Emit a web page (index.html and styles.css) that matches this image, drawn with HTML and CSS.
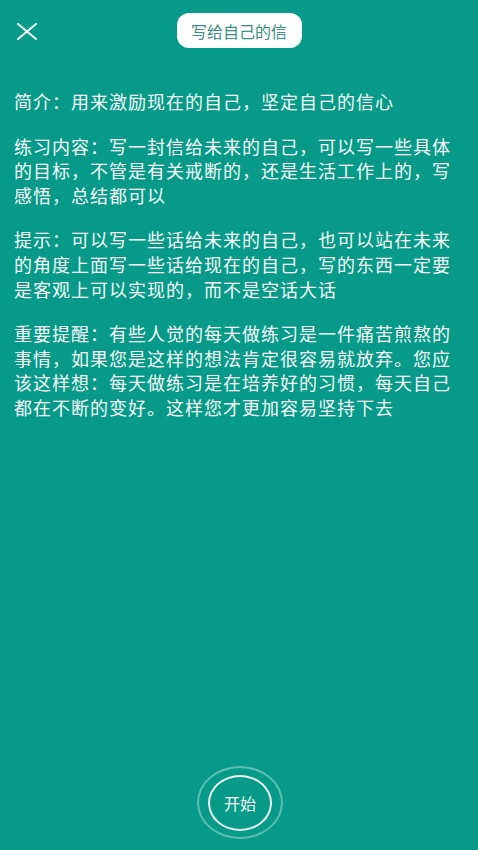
FILE: index.html
```html
<!DOCTYPE html>
<html lang="zh">
<head>
<meta charset="utf-8">
<title>写给自己的信</title>
<link rel="stylesheet" href="styles.css">
</head>
<body>
<div class="page">
  <header class="header">
    <button class="close" aria-label="关闭">
      <svg width="20" height="17" viewBox="0 0 20 17"><path d="M1 1 L19 16 M19 1 L1 16" stroke="#f4fbf9" stroke-width="2" fill="none" stroke-linecap="round"/></svg>
    </button>
    <div class="pill">写给自己的信</div>
  </header>
  <main class="content">
    <p>简介：用来激励现在的自己，坚定自己的信心</p>
    <p>练习内容：写一封信给未来的自己，可以写一些具体的目标，不管是有关戒断的，还是生活工作上的，写感悟，总结都可以</p>
    <p>提示：可以写一些话给未来的自己，也可以站在未来的角度上面写一些话给现在的自己，写的东西一定要是客观上可以实现的，而不是空话大话</p>
    <p>重要提醒：有些人觉的每天做练习是一件痛苦煎熬的事情，如果您是这样的想法肯定很容易就放弃。您应该这样想：每天做练习是在培养好的习惯，每天自己都在不断的变好。这样您才更加容易坚持下去</p>
  </main>
  <footer class="footer">
    <div class="ring-outer">
      <button class="start">开始</button>
    </div>
  </footer>
</div>
</body>
</html>
```
FILE: styles.css
```css
html, body {
  margin: 0;
  padding: 0;
}
body {
  background: #079a88;
  font-family: "Noto Sans CJK SC", "Noto Sans", sans-serif;
  color: #f4fbf9;
}
.page {
  height: 850px;
  display: flex;
  flex-direction: column;
  box-sizing: border-box;
}
.header {
  position: relative;
  height: 35px;
  margin-top: 13px;
  display: flex;
  justify-content: center;
  align-items: center;
}
.close {
  position: absolute;
  left: 17px;
  top: 10px;
  padding: 0;
  border: 0;
  background: none;
  line-height: 0;
}
.pill {
  width: 125px;
  height: 35px;
  box-sizing: border-box;
  background: #fdfefe;
  border-radius: 12px;
  color: #3b8f80;
  font-size: 16px;
  display: flex;
  align-items: center;
  justify-content: center;
}
.content {
  flex: 1;
  padding: 0 14px;
  margin-top: 41px;
}
.content p {
  margin: 0 0 20px;
  font-size: 18px;
  line-height: 24.6px;
  letter-spacing: 1px;
}
.footer {
  display: flex;
  justify-content: center;
  padding-bottom: 11px;
}
.ring-outer {
  width: 86px;
  height: 73px;
  box-sizing: border-box;
  border: 2px solid rgba(255, 255, 255, 0.35);
  border-radius: 50%;
  display: flex;
  align-items: center;
  justify-content: center;
  margin-left: 2px;
}
.start {
  width: 64px;
  height: 56px;
  box-sizing: border-box;
  border: 2px solid #eaf7f4;
  border-radius: 50%;
  background: transparent;
  color: #f4fbf9;
  font-family: "Noto Sans CJK SC", sans-serif;
  font-size: 16px;
  padding: 0;
}
```
